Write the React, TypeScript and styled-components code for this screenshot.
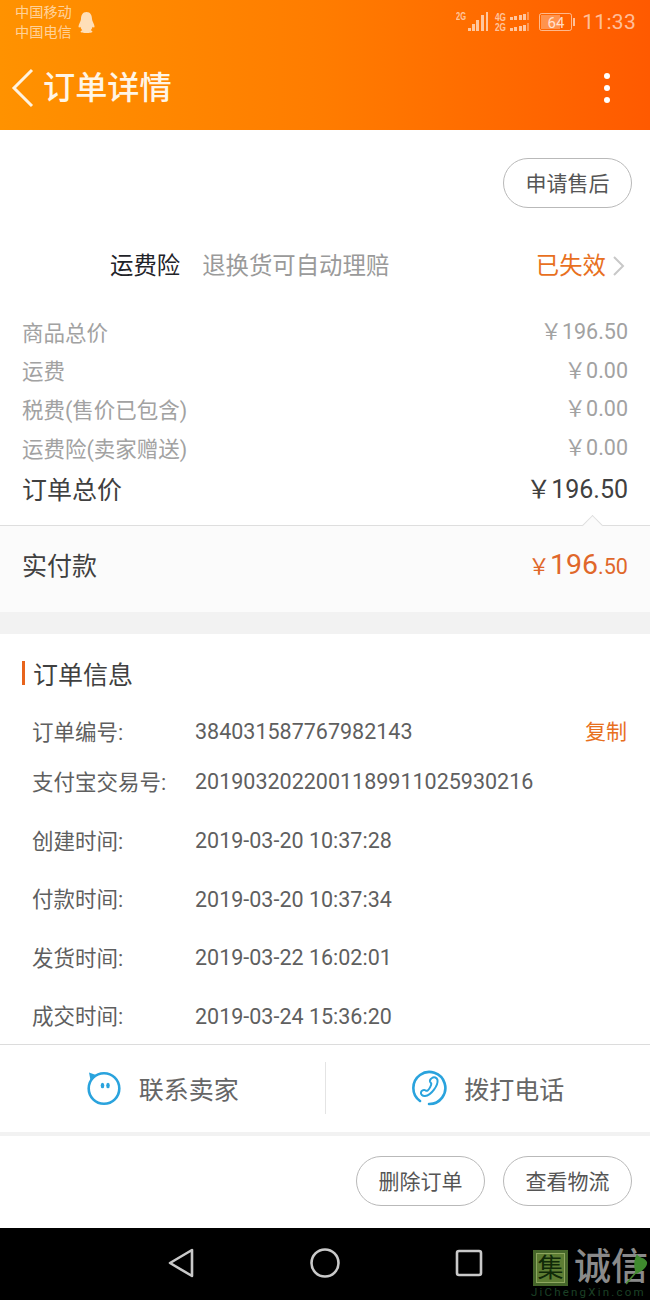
import React from "react";
import styled, { createGlobalStyle } from "styled-components";

const Global = createGlobalStyle`
  html, body { margin: 0; padding: 0; background: #fff; }
  body { font-family: Roboto, "Noto Sans CJK SC", sans-serif; }
  * { box-sizing: border-box; }
`;
const Page = styled.div`
  width: 650px; height: 1300px; position: relative; overflow: hidden; display: flex; flex-direction: column; background: #fff;
`;
const Header = styled.header`
  height: 130px; flex: none; background: linear-gradient(90deg, #ff9200 0%, #ff7c00 50%, #ff5a00 100%); display: flex; flex-direction: column;
`;
const StatusBar = styled.div`
  height: 44px; display: flex; align-items: flex-start; justify-content: space-between; padding: 2px 14px 0 15px; color: rgba(255,255,255,.62);
`;
const Carriers = styled.div`
  display: flex; align-items: center; gap: 4px; padding-top: 1px;
`;
const CarrierText = styled.div`
  font-size: 14.2px; line-height: 19.5px; width: 58px; white-space: nowrap;
`;
const StatusRight = styled.div`
  display: flex; align-items: center; gap: 7px; height: 40px;
`;
const Clock = styled.span`
  font-size: 21px; letter-spacing: .3px;
`;
const NavRow = styled.div`
  flex: 1; display: flex; align-items: center; padding: 2px 40px 0 11px; color: #fff;
`;
const Title = styled.h1`
  margin: 0 0 0 7px; flex: 1; font-size: 32.2px; line-height: 44px; font-weight: 500; color: #fff5e6;
`;
const Dots = styled.div`
  display: flex; flex-direction: column; gap: 6px;
`;
const Dot = styled.i`
  width: 6px; height: 6px; border-radius: 50%; background: #fff;
`;
const ActionRow = styled.div<{ $height: number }>`
  display: flex; justify-content: flex-end; align-items: center; gap: 18px; height: ${p => p.$height}px; padding: 0 18px 1px 0; flex: none;
`;
const Pill = styled.div`
  width: 129px; height: 50px; border: 1px solid #b9b9b9; border-radius: 25px; display: flex; align-items: center; justify-content: center;
  padding-bottom: 2px; font-size: 21px; color: #555; background: #fff;
`;
const InsuranceRow = styled.div`
  height: 50px; margin-top: 2px; flex: none; display: flex; align-items: center; padding: 0 24px 0 110px; font-size: 23.4px;
`;
const InsName = styled.span`
  color: #1f2329; margin-right: 22px;
`;
const InsDesc = styled.span`
  color: #9a9a9a; flex: 1;
`;
const InsState = styled.span`
  color: #e8701e;
`;
const Prices = styled.div`
  padding: 23px 22px 0; flex: none;
`;
const PriceRow = styled.div`
  height: 38.6px; display: flex; justify-content: space-between; align-items: center; font-size: 21.5px; color: #a2a2a2;
`;
const PriceValue = styled.span`
  margin-bottom: 3px;
`;
const TotalRow = styled.div`
  height: 44px; display: flex; justify-content: space-between; align-items: center; font-size: 25px; color: #404040;
`;
const Paid = styled.div`
  position: relative; margin-top: 15px; height: 87px; flex: none; border-top: 1px solid #dedede; background: #fbfbfb; display: flex; align-items: center; justify-content: space-between; padding: 0 22px 10px;
`;
const Notch = styled.i`
  position: absolute; right: 50px; top: -8px; width: 15px; height: 15px; background: #fbfbfb; border-top: 1px solid #dedede; border-left: 1px solid #dedede; transform: rotate(45deg);
`;
const PaidLabel = styled.span`
  font-size: 25px; color: #404040;
`;
const PaidAmount = styled.span`
  color: #e0672a; font-size: 21.6px; display: flex; align-items: baseline;
`;
const PaidBig = styled.span`
  font-size: 28.5px; font-weight: 400;
`;
const Gap = styled.div<{ $h: number }>`
  height: ${p => p.$h}px; flex: none; background: #f2f2f2;
`;
const InfoHeading = styled.div`
  margin: 27px 0 0 22px; height: 24px; flex: none; display: flex; align-items: center; border-left: 3px solid #e8641c; padding-left: 8px; font-size: 25px; color: #404040;
`;
const InfoList = styled.div`
  padding: 26.5px 23px 0 32px; flex: none; height: 359px;
`;
const InfoRow = styled.div<{ $h: number }>`
  height: ${p => p.$h}px; display: flex; align-items: center; font-size: 21.5px; color: #5f5f5f;
`;
const InfoLabel = styled.span`
  width: 163px; flex: none; margin-bottom: 3px;
`;
const InfoValue = styled.span`
  flex: 1;
`;
const CopyLink = styled.span`
  color: #e8701e; font-size: 21px; margin-bottom: 4px;
`;
const ContactBar = styled.div`
  height: 88px; flex: none; border-top: 1px solid #dcdcdc; display: flex; align-items: center; padding-bottom: 2px;
`;
const ContactItem = styled.div<{ $divider?: boolean }>`
  flex: 1; height: 52px; display: flex; align-items: center; justify-content: center; gap: 17px; font-size: 25px; color: #666;
  border-left: ${p => (p.$divider ? "1px solid #e4e4e4" : "none")};
`;
const BottomNav = styled.nav`
  height: 72px; flex: none; background: #000; display: flex; align-items: center; padding: 0 0 2px 165px; gap: 115px; margin-top: auto;
`;
const Watermark = styled.div`
  position: absolute; left: 531px; top: 1250px; width: 119px; height: 50px; display: flex; align-items: flex-start; gap: 6px; padding-left: 2px;
`;
const Seal = styled.div`
  width: 35px; height: 36px; background: #5d7d33; border: 3px solid #46662a; outline: 1px solid #8ea65f; outline-offset: -4px; color: #102a08; display: flex; align-items: center; justify-content: center; font-size: 26px; line-height: 1; flex: none;
`;
const MarkText = styled.div`
  font-size: 37px; line-height: 36px; height: 36px; color: #8a8a8a; white-space: nowrap; font-weight: 500;
`;
const MarkUrl = styled.div`
  position: absolute; left: 0; top: 37px; font-size: 11.5px; line-height: 10px; letter-spacing: 2.2px; color: #1c4026; white-space: nowrap;
`;
const Leaf = styled.svg`
  position: absolute; right: 0; top: 2px;
`;
const Tiny = styled.text`
  font-family: "Liberation Sans", sans-serif; font-size: 10px; font-weight: 700; fill: rgba(255,255,255,.62);
`;

const Signals = () => (
  <svg width="76" height="26" viewBox="0 0 76 26" fill="rgba(255,255,255,.62)">
    <Tiny x="0" y="11" textLength="10" lengthAdjust="spacingAndGlyphs">2G</Tiny>
    {[[12,19,3,3],[16,15,3,7],[20,11,3,11],[25,6,3,16],[30,3,2,19]].map(([x,y,w,h],i)=><rect key={i} x={x} y={y} width={w} height={h}/>)}
    <Tiny x="39" y="12" textLength="11" lengthAdjust="spacingAndGlyphs">4G</Tiny>
    <Tiny x="39" y="22" textLength="11" lengthAdjust="spacingAndGlyphs">2G</Tiny>
    {[0,1].map(r=>[[54,8,3,3],[58,7,3,4],[63,6,3,5],[67,5,3,6],[71,3,2,8]].map(([x,y,w,h],i)=><rect key={`${r}${i}`} x={x} y={y+r*11} width={w} height={h} opacity={i===4?0.5:1}/>))}
  </svg>
);
const Battery = () => (
  <svg width="36" height="18" viewBox="0 0 36 18">
    <rect x=".5" y=".5" width="32" height="17" rx="2" fill="none" stroke="rgba(255,255,255,.55)"/>
    <rect x="2" y="2" width="19" height="14" fill="rgba(255,255,255,.3)"/>
    <rect x="34" y="5" width="2" height="8" fill="rgba(255,255,255,.6)"/>
    <text x="17" y="14.500" textAnchor="middle" fontFamily="Roboto" fontSize="15" fill="rgba(255,255,255,.75)">64</text>
  </svg>
);
const Penguin = () => (
  <svg width="19" height="24" viewBox="0 0 18 24"><path d="M9 1c4 0 5.500 3.500 5.500 7 0 2 2.500 5.500 2.500 7.500 0 1.500-1.200 1-2 .3-.3 1.700-1 2.700-1.800 3.400 1 .4 1.800 1 1.800 1.600 0 1-3 1.200-6 1.200s-6-.2-6-1.200c0-.6.800-1.200 1.800-1.600C4 18.500 3.300 17.500 3 15.800c-.8.7-2 1.200-2-.3C1 13.500 3.500 10 3.500 8 3.500 4.500 5 1 9 1z" fill="rgba(255,255,255,.72)"/></svg>
);
const Back = () => (
  <svg width="25" height="40" viewBox="0 0 25 40"><path d="M21 2 3 20l18 18" fill="none" stroke="#fff3df" strokeWidth="3"/></svg>
);
const ChevronRight = () => (
  <svg width="14" height="22" viewBox="0 0 14 22" style={{ marginLeft: 6, verticalAlign: -3 }}><path d="m2 2 9 9-9 9" fill="none" stroke="#c8c8c8" strokeWidth="2"/></svg>
);
const Smile = () => (
  <svg width="36" height="36" viewBox="0 0 36 36">
    <circle cx="18" cy="18.500" r="15.300" fill="none" stroke="#2aa3dd" strokeWidth="2.600"/>
    <path d="M3 2.500 10 5 4.500 10.500z" fill="#2aa3dd"/>
    <ellipse cx="16.500" cy="15.500" rx="1.800" ry="2.700" fill="#2aa3dd"/>
    <ellipse cx="22" cy="15.500" rx="1.800" ry="2.700" fill="#2aa3dd"/>
  </svg>
);
const Phone = () => (
  <svg width="36" height="36" viewBox="0 0 36 36" fill="none" stroke="#2aa3dd" strokeWidth="2.600" strokeLinecap="round">
    <path d="M9 31A16 16 0 1 1 18 34"/>
    <path d="M21 8c2-1.500 5-.5 5.500 2 .8 5-6 15.500-12.500 16-2.500.2-4.500-1.800-4-3.800.4-1.600 2.500-2.700 4-2 1.200.5 1.500 1 2.500.5 1.500-1 4-5.500 3.800-7-.2-1-1-1.200-1.300-2.200-.3-1.200.7-2.700 2-3.500z" strokeWidth="2"/>
  </svg>
);
const NavBack = () => (
  <svg width="30" height="32" viewBox="0 0 30 32"><path d="M27 3v26L5 16z" fill="none" stroke="#c9c9c9" strokeWidth="2.600" strokeLinejoin="round"/></svg>
);
const NavHome = () => (
  <svg width="30" height="30" viewBox="0 0 30 30"><circle cx="15" cy="15" r="13.500" fill="none" stroke="#c9c9c9" strokeWidth="2.600"/></svg>
);
const NavSquare = () => (
  <svg width="28" height="28" viewBox="0 0 28 28"><rect x="2" y="2" width="24" height="24" rx="2" fill="none" stroke="#c9c9c9" strokeWidth="2.600"/></svg>
);

const prices = [
  ["商品总价", "￥196.50"],
  ["运费", "￥0.00"],
  ["税费(售价已包含)", "￥0.00"],
  ["运费险(卖家赠送)", "￥0.00"],
];
const info: [string, string, number][] = [
  ["订单编号:", "384031587767982143", 40],
  ["支付宝交易号:", "2019032022001189911025930216", 60],
  ["创建时间:", "2019-03-20 10:37:28", 58],
  ["付款时间:", "2019-03-20 10:37:34", 59],
  ["发货时间:", "2019-03-22 16:02:01", 58],
  ["成交时间:", "2019-03-24 15:36:20", 59],
];

export default function App() {
  return (
    <Page>
      <Global />
      <Header>
        <StatusBar>
          <Carriers>
            <CarrierText>中国移动<br />中国电信</CarrierText>
            <Penguin />
          </Carriers>
          <StatusRight>
            <Signals />
            <Battery />
            <Clock>11:33</Clock>
          </StatusRight>
        </StatusBar>
        <NavRow>
          <Back />
          <Title>订单详情</Title>
          <Dots><Dot /><Dot /><Dot /></Dots>
        </NavRow>
      </Header>
      <ActionRow $height={107}><Pill>申请售后</Pill></ActionRow>
      <InsuranceRow>
        <InsName>运费险</InsName>
        <InsDesc>退换货可自动理赔</InsDesc>
        <InsState>已失效<ChevronRight /></InsState>
      </InsuranceRow>
      <Prices>
        {prices.map(([a, b]) => <PriceRow key={a}><span>{a}</span><PriceValue>{b}</PriceValue></PriceRow>)}
        <TotalRow><span>订单总价</span><PriceValue>￥196.50</PriceValue></TotalRow>
      </Prices>
      <Paid>
        <Notch />
        <PaidLabel>实付款</PaidLabel>
        <PaidAmount>￥<PaidBig>196</PaidBig>.50</PaidAmount>
      </Paid>
      <Gap $h={22} />
      <InfoHeading>订单信息</InfoHeading>
      <InfoList>
        {info.map(([a, b, h], i) => (
          <InfoRow key={a} $h={h}>
            <InfoLabel>{a}</InfoLabel>
            <InfoValue>{b}</InfoValue>
            {i === 0 && <CopyLink>复制</CopyLink>}
          </InfoRow>
        ))}
      </InfoList>
      <ContactBar>
        <ContactItem><Smile />联系卖家</ContactItem>
        <ContactItem $divider><Phone />拨打电话</ContactItem>
      </ContactBar>
      <Gap $h={4} />
      <ActionRow $height={90}>
        <Pill>删除订单</Pill>
        <Pill>查看物流</Pill>
      </ActionRow>
      <BottomNav>
        <NavBack />
        <NavHome />
        <NavSquare />
      </BottomNav>
      <Watermark>
        <Seal>集</Seal>
        <MarkText>诚信</MarkText>
        <MarkUrl>JiChengXin.com</MarkUrl>
        <Leaf width="24" height="34" viewBox="0 0 24 34"><path d="M11 2c1 4 8 3 10 8 1 5-6 10-11 12C8 17 7 8 11 2z" fill="#3f8a2e"/><path d="M12 18 0 32" stroke="#4a8a30" strokeWidth="1.500" fill="none"/></Leaf>
      </Watermark>
    </Page>
  );
}
